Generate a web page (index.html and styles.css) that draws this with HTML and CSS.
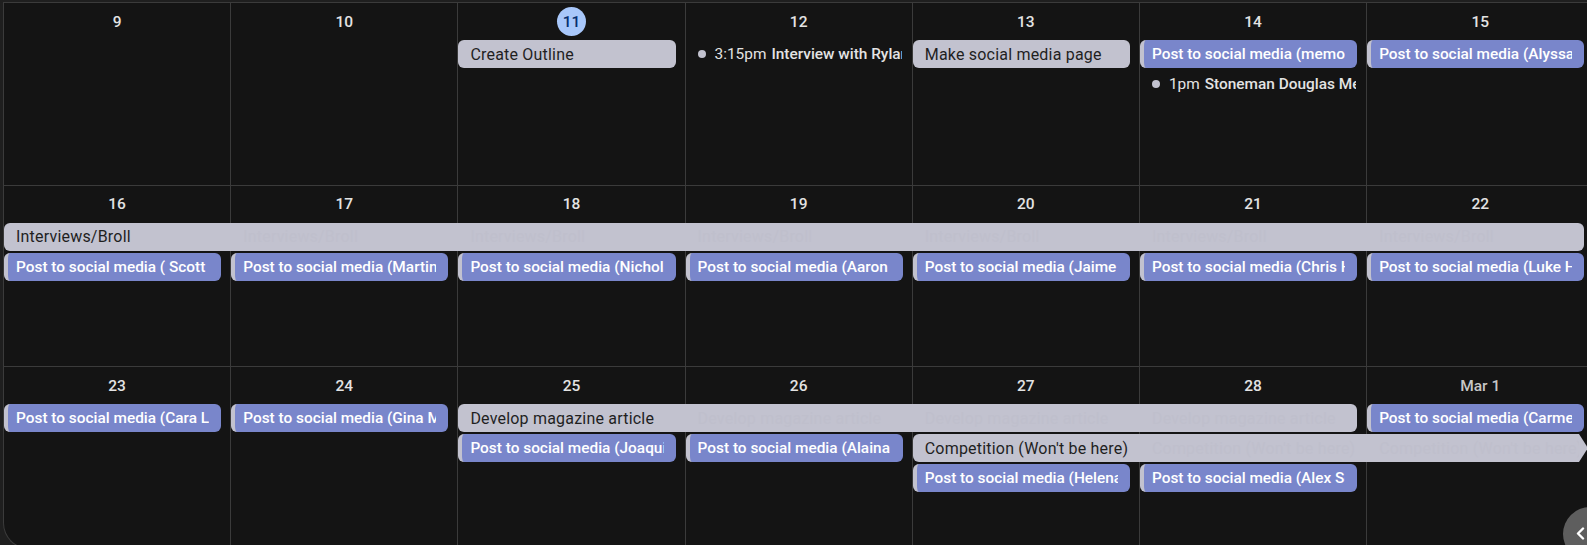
FILE: index.html
```html
<!DOCTYPE html>
<html>
<head>
<meta charset="utf-8">
<link rel="stylesheet" href="styles.css">
</head>
<body>
<div class="cal">
  <div class="week">
    <div class="day c1"><div class="date">9</div></div>
    <div class="day c2"><div class="date">10</div></div>
    <div class="day c3"><div class="date"><span class="today">11</span></div></div>
    <div class="day c4"><div class="date">12</div></div>
    <div class="day c5"><div class="date">13</div></div>
    <div class="day c6"><div class="date">14</div></div>
    <div class="day c7"><div class="date">15</div></div>

    <div class="chip grey r1 c3"><span class="txt">Create Outline</span></div>
    <div class="timed r1 c4"><span class="dot"></span><span class="time">3:15pm</span><span class="title">Interview with Rylan</span></div>
    <div class="chip grey r1 c5"><span class="txt">Make social media page</span></div>
    <div class="chip blue r1 c6"><span class="txt">Post to social media (memorial)</span></div>
    <div class="timed r2 c6"><span class="dot"></span><span class="time">1pm</span><span class="title">Stoneman Douglas Memorial</span></div>
    <div class="chip blue r1 c7"><span class="txt">Post to social media (Alyssa Alhadeff)</span></div>
  </div>

  <div class="week">
    <div class="day c1"><div class="date">16</div></div>
    <div class="day c2"><div class="date">17</div></div>
    <div class="day c3"><div class="date">18</div></div>
    <div class="day c4"><div class="date">19</div></div>
    <div class="day c5"><div class="date">20</div></div>
    <div class="day c6"><div class="date">21</div></div>
    <div class="day c7"><div class="date">22</div></div>

    <div class="chip grey multi r1 c1 span7">
      <span class="seg">Interviews/Broll</span>
      <span class="seg ghost">Interviews/Broll</span>
      <span class="seg ghost">Interviews/Broll</span>
      <span class="seg ghost">Interviews/Broll</span>
      <span class="seg ghost">Interviews/Broll</span>
      <span class="seg ghost">Interviews/Broll</span>
      <span class="seg ghost">Interviews/Broll</span>
    </div>
    <div class="chip blue r2 c1"><span class="txt">Post to social media ( Scott Beigel)</span></div>
    <div class="chip blue r2 c2"><span class="txt">Post to social media (Martin Duque)</span></div>
    <div class="chip blue r2 c3"><span class="txt">Post to social media (Nicholas Dworet)</span></div>
    <div class="chip blue r2 c4"><span class="txt">Post to social media (Aaron Feis)</span></div>
    <div class="chip blue r2 c5"><span class="txt">Post to social media (Jaime Guttenberg)</span></div>
    <div class="chip blue r2 c6"><span class="txt">Post to social media (Chris Hixon)</span></div>
    <div class="chip blue r2 c7"><span class="txt">Post to social media (Luke Hoyer)</span></div>
  </div>

  <div class="week">
    <div class="day c1"><div class="date">23</div></div>
    <div class="day c2"><div class="date">24</div></div>
    <div class="day c3"><div class="date">25</div></div>
    <div class="day c4"><div class="date">26</div></div>
    <div class="day c5"><div class="date">27</div></div>
    <div class="day c6"><div class="date">28</div></div>
    <div class="day c7"><div class="date month">Mar 1</div></div>

    <div class="chip blue r1 c1"><span class="txt">Post to social media (Cara Loughran)</span></div>
    <div class="chip blue r1 c2"><span class="txt">Post to social media (Gina Montalto)</span></div>
    <div class="chip grey multi r1 c3 span4">
      <span class="seg">Develop magazine article</span>
      <span class="seg ghost">Develop magazine article</span>
      <span class="seg ghost">Develop magazine article</span>
      <span class="seg ghost">Develop magazine article</span>
    </div>
    <div class="chip blue r1 c7"><span class="txt">Post to social media (Carmen Schentrup)</span></div>

    <div class="chip blue r2 c3"><span class="txt">Post to social media (Joaquin Oliver)</span></div>
    <div class="chip blue r2 c4"><span class="txt">Post to social media (Alaina Petty)</span></div>
    <div class="arrowchip r2 c5 span3">
      <div class="arrowbody">
        <span class="seg">Competition (Won't be here)</span>
        <span class="seg ghost">Competition (Won't be here)</span>
        <span class="seg ghost">Competition (Won't be here)</span>
      </div>
      <svg class="arrowtip" width="9" height="28" viewBox="0 0 9 28"><path d="M0 0 L9 14 L0 28 Z" fill="#c2c2cf"/></svg>
    </div>

    <div class="chip blue r3 c5"><span class="txt">Post to social media (Helena Ramsay)</span></div>
    <div class="chip blue r3 c6"><span class="txt">Post to social media (Alex Schachter)</span></div>
  </div>
</div>

<div class="sidebtn">
  <svg width="9" height="13" viewBox="0 0 9 13"><path d="M7 1.5 L2 6.5 L7 11.5" fill="none" stroke="#ffffff" stroke-width="2.4" stroke-linecap="round" stroke-linejoin="round"/></svg>
</div>
</body>
</html>
```

FILE: styles.css
```css
html, body {
  margin: 0;
  padding: 0;
  overflow: hidden;
  background: #1f1f1f;
  width: 1587px;
  height: 545px;
}

body {
  padding: 2px 0 0 3px;
  box-sizing: border-box;
  font-family: Roboto, "Liberation Sans", sans-serif;
}

.cal {
  width: 1592px;
  background: #141414;
  border-left: 1px solid #3b3b3b;
  border-top: 1px solid #3b3b3b;
  border-bottom: 1px solid #3b3b3b;
  border-bottom-left-radius: 26px;
  overflow: hidden;
}

.week {
  display: grid;
  grid-template-columns: repeat(7, 227.2px);
  grid-template-rows: 37px repeat(3, 30px) 1fr;
  height: 181.5px;
  box-sizing: border-box;
}

.week + .week {
  border-top: 1px solid #3b3b3b;
}

.day {
  grid-row: 1 / -1;
  border-right: 1px solid #3b3b3b;
}

.c1 { grid-column-start: 1; }
.c2 { grid-column-start: 2; }
.c3 { grid-column-start: 3; }
.c4 { grid-column-start: 4; }
.c5 { grid-column-start: 5; }
.c6 { grid-column-start: 6; }
.c7 { grid-column-start: 7; }

.span3 { grid-column-end: span 3; }
.span4 { grid-column-end: span 4; }
.span7 { grid-column-end: span 7; }

.r1 { grid-row: 2; }
.r2 { grid-row: 3; }
.r3 { grid-row: 4; }

.date {
  display: flex;
  justify-content: center;
  align-items: center;
  height: 29px;
  margin-top: 4px;
  color: #e3e3e3;
  font-size: 15.5px;
  font-weight: 500;
}

.date.month {
  color: #c7c7c7;
}

.today {
  display: flex;
  justify-content: center;
  align-items: center;
  width: 29px;
  height: 29px;
  border-radius: 50%;
  background: #a8c7fa;
  color: #062e6f;
  font-weight: 500;
}

.chip {
  display: flex;
  align-items: center;
  height: 28px;
  margin: 0 10px 2px 0;
  border-radius: 6px;
  box-sizing: border-box;
  overflow: hidden;
  font-size: 16px;
  letter-spacing: 0.2px;
  white-space: nowrap;
  min-width: 0;
}

.txt {
  display: block;
  overflow: hidden;
  flex: 1;
  min-width: 0;
}

.grey {
  background: #c2c2cf;
  color: #1f1f1f;
  padding: 0 12px;
}

.grey.multi {
  padding: 0;
}

.blue {
  background: #7986cb;
  color: #ffffff;
  font-weight: 500;
  font-size: 15.4px;
  letter-spacing: 0;
  border-left: 4px solid #c2c2cf;
  padding: 0 12px 0 8px;
}

.seg {
  flex: none;
  width: 227.2px;
  padding-left: 12px;
  box-sizing: border-box;
  overflow: hidden;
}

.ghost {
  color: #bfbfcc;
}

.arrowchip {
  display: flex;
  height: 28px;
  margin: 0 6px 2px 0;
  font-size: 16px;
  letter-spacing: 0.2px;
  white-space: nowrap;
  min-width: 0;
}

.arrowbody {
  flex: 1;
  display: flex;
  align-items: center;
  background: #c2c2cf;
  color: #1f1f1f;
  border-radius: 6px 0 0 6px;
  overflow: hidden;
  min-width: 0;
}

.arrowtip {
  flex: none;
  display: block;
}

.timed {
  display: flex;
  align-items: center;
  height: 28px;
  margin: 0 11px 2px 0;
  padding-left: 12px;
  overflow: hidden;
  white-space: nowrap;
  color: #e3e3e3;
  font-size: 15.4px;
  min-width: 0;
}

.dot {
  flex: none;
  width: 8px;
  height: 8px;
  border-radius: 50%;
  background: #c2c2cf;
  margin-right: 9px;
}

.time {
  margin-right: 5px;
}

.title {
  font-weight: 500;
}

.sidebtn {
  position: absolute;
  left: 1563px;
  top: 507px;
  width: 54px;
  height: 54px;
  border-radius: 50%;
  background: #5e5e5e;
  display: flex;
  align-items: center;
  padding-left: 13px;
  box-sizing: border-box;
}

.sidebtn svg {
  display: block;
  margin-top: -2px;
}
```
